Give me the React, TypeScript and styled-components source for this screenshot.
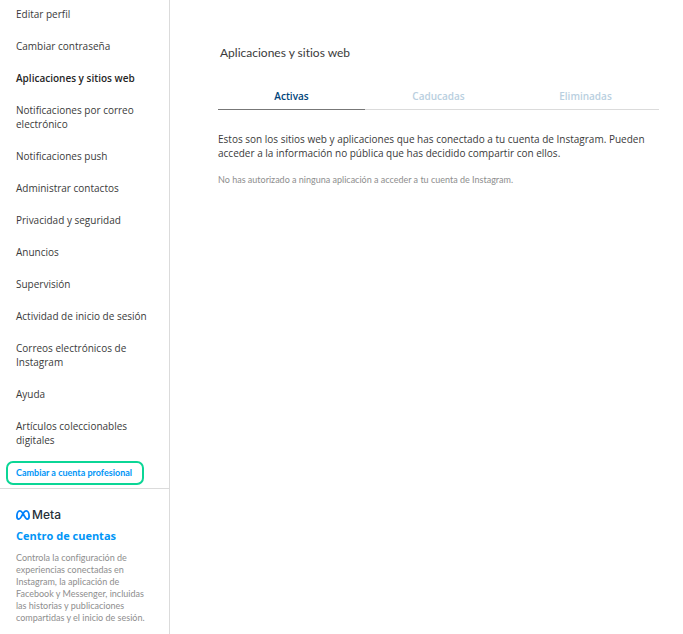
import React, { useState } from "react";
import styled, { createGlobalStyle } from "styled-components";

const GlobalStyle = createGlobalStyle`
  *, *::before, *::after { box-sizing: border-box; }
  body {
    margin: 0;
    background: #fff;
    color: #3a3a3a;
    font-family: "Open Sans", "Noto Sans", sans-serif;
    font-size: 10px;
    font-variant-ligatures: none;
    line-height: 14px;
  }
  h1, h2, p, ul { margin: 0; padding: 0; }
`;

const compactFont = `Lato, "Open Sans", sans-serif`;

const Page = styled.div`
  display: flex;
  min-height: 100vh;
`;

const Sidebar = styled.aside`
  flex: 0 0 170px;
  border-right: 1px solid #dbdbdb;
`;

const Menu = styled.ul`
  display: flex;
  flex-direction: column;
  gap: 18px;
  padding: 7px 16px 0;
  list-style: none;
`;

const MenuLink = styled.a<{ $active?: boolean }>`
  display: block;
  color: ${(p) => (p.$active ? "#262626" : "#3a3a3a")};
  font-weight: ${(p) => (p.$active ? 600 : 400)};
  text-decoration: none;
`;

const SwitchArea = styled.div`
  padding: 14px 6px 3px;
  border-bottom: 1px solid #dbdbdb;
`;

const SwitchLink = styled.a`
  display: inline-block;
  padding: 3px 10px 3px 8px;
  border: 2px solid #0bd696;
  border-radius: 7px;
  color: #0095f6;
  font-family: ${compactFont};
  font-size: 9px;
  font-weight: 700;
  line-height: 14px;
  vertical-align: top;
  white-space: nowrap;
  text-decoration: none;
`;

const Accounts = styled.section`
  padding: 18px 16px 10px;
`;

const Brand = styled.div`
  display: flex;
  align-items: center;
  gap: 2px;
  height: 16px;
  color: #262f38;
  font-family: Inter, "Open Sans", sans-serif;
  font-size: 12px;
  font-weight: 500;
`;

const AccountsLink = styled.a`
  display: block;
  margin-top: 6px;
  color: #0095f6;
  font-size: 11px;
  font-weight: 700;
  text-decoration: none;
`;

const AccountsText = styled.p`
  margin-top: 9px;
  color: #8e8e8e;
  font-family: ${compactFont};
  font-size: 9px;
  line-height: 12px;
`;

const Main = styled.main`
  flex: 1;
  min-width: 0;
  padding: 45px 24px 24px 48px;
`;

const Title = styled.h1`
  padding-left: 2px;
  font-family: ${compactFont};
  font-size: 12px;
  font-weight: 400;
  line-height: 16px;
`;

const Tabs = styled.div`
  display: grid;
  grid-template-columns: repeat(3, 1fr);
  margin-top: 21px;
`;

const Tab = styled.button<{ $active: boolean }>`
  height: 28px;
  padding: 0;
  border: 0;
  border-bottom: 1px solid ${(p) => (p.$active ? "#777" : "#dbdbdb")};
  background: none;
  color: ${(p) => (p.$active ? "#00447a" : "#b9cfe0")};
  font: inherit;
  font-weight: 600;
  cursor: pointer;
`;

const Intro = styled.p`
  margin-top: 22px;
`;

const Note = styled.p`
  margin-top: 13px;
  color: #8e8e8e;
  font-family: ${compactFont};
  font-size: 9px;
`;

const menuItems = [
  "Editar perfil",
  "Cambiar contraseña",
  "Aplicaciones y sitios web",
  "Notificaciones por correo electrónico",
  "Notificaciones push",
  "Administrar contactos",
  "Privacidad y seguridad",
  "Anuncios",
  "Supervisión",
  "Actividad de inicio de sesión",
  "Correos electrónicos de Instagram",
  "Ayuda",
  "Artículos coleccionables digitales",
];

const tabs = ["Activas", "Caducadas", "Eliminadas"];

const MetaMark = () => (
  <svg width="14" height="10" viewBox="0 0 14 10" fill="none" aria-hidden="true">
    <path
      d="M7 3.6C5.9 1.8 5 .9 3.9.9 2.1.9.9 3.5.9 6.2c0 1.8.7 2.9 1.9 2.9C4 9.1 4.9 7.7 7 3.6 8.1 1.7 9 .9 10.1.9c1.8 0 3 2.6 3 5.3 0 1.8-.7 2.9-1.9 2.9C10 9.1 9.1 7.4 7 3.6Z"
      stroke="#0080fb"
      strokeWidth="1.8"
      strokeLinejoin="round"
    />
  </svg>
);

export default function App() {
  const [current, setCurrent] = useState(tabs[0]);
  return (
    <>
      <GlobalStyle />
      <Page>
        <Sidebar>
          <nav>
            <Menu>
              {menuItems.map((item, i) => (
                <li key={item}>
                  <MenuLink href="#" $active={i === 2}>
                    {item}
                  </MenuLink>
                </li>
              ))}
            </Menu>
            <SwitchArea>
              <SwitchLink href="#">Cambiar a cuenta profesional</SwitchLink>
            </SwitchArea>
          </nav>
          <Accounts>
            <Brand>
              <MetaMark />
              Meta
            </Brand>
            <AccountsLink href="#">Centro de cuentas</AccountsLink>
            <AccountsText>
              Controla la configuración de experiencias conectadas en Instagram, la aplicación de
              Facebook y Messenger, incluidas las historias y publicaciones compartidas y el inicio
              de sesión.
            </AccountsText>
          </Accounts>
        </Sidebar>
        <Main>
          <Title>Aplicaciones y sitios web</Title>
          <Tabs role="tablist">
            {tabs.map((tab) => (
              <Tab
                key={tab}
                type="button"
                role="tab"
                aria-selected={tab === current}
                $active={tab === current}
                onClick={() => setCurrent(tab)}
              >
                {tab}
              </Tab>
            ))}
          </Tabs>
          <Intro>
            Estos son los sitios web y aplicaciones que has conectado a tu cuenta de Instagram.
            Pueden acceder a la información no pública que has decidido compartir con ellos.
          </Intro>
          <Note>No has autorizado a ninguna aplicación a acceder a tu cuenta de Instagram.</Note>
        </Main>
      </Page>
    </>
  );
}
